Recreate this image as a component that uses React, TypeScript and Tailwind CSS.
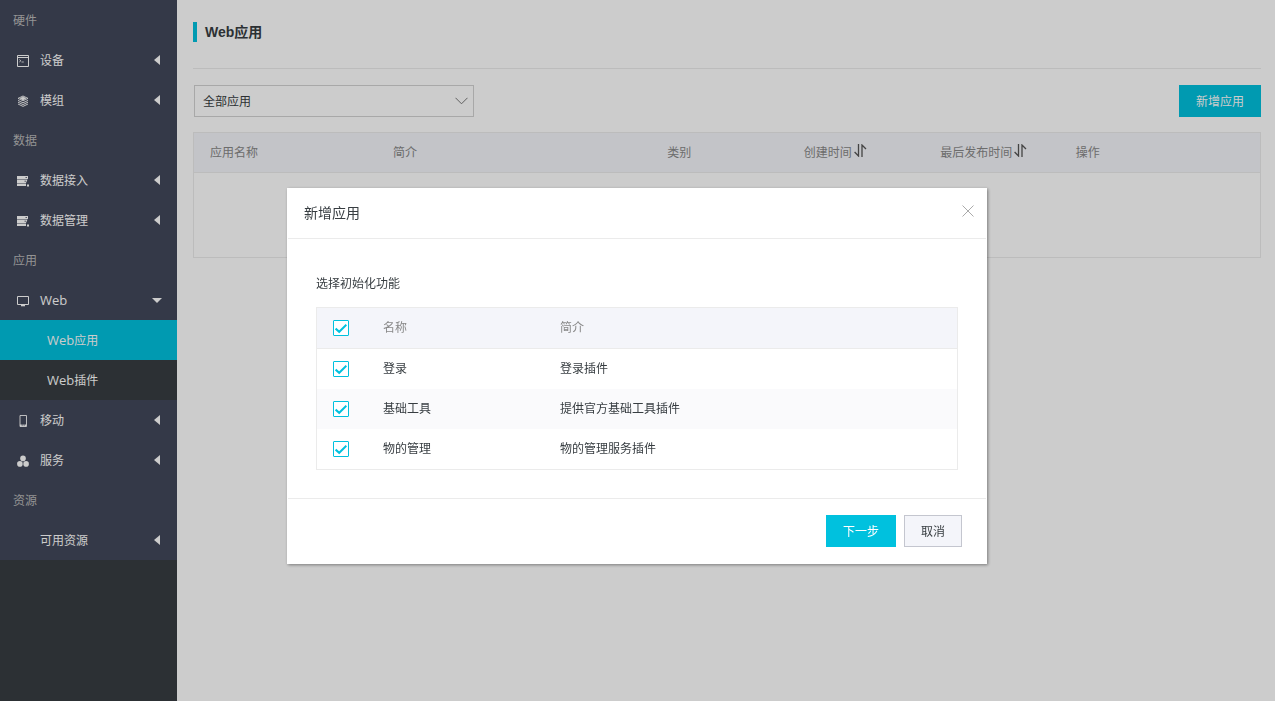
import React, { useState } from 'react';

interface MenuItem {
  label: string;
  icon?: React.ReactNode;
  open?: boolean;
  children?: { label: string; active?: boolean }[];
}

interface MenuGroup {
  title: string;
  items: MenuItem[];
}

interface Feature {
  id: string;
  name: string;
  intro: string;
}

const DeviceIcon = () => (
  <svg width="12" height="12" viewBox="0 0 12 12" fill="none" stroke="currentColor">
    <path d="M.5 .5h11v11H.5z" />
    <path d="M1 2.5h10" strokeWidth="1" />
    <path d="M2.3 4.5l1.6 1.3-1.6 1.2" strokeWidth=".8" />
    <path d="M4.5 7h2.3" strokeWidth=".8" />
  </svg>
);

const ModuleIcon = () => (
  <svg width="12" height="12" viewBox="0 0 12 12" fill="none" stroke="currentColor" strokeWidth=".9">
    <path d="M6 1l5 2.4-5 2.4-5-2.4z" />
    <path d="M6 2l2.6 1.4L6 4.8 3.4 3.4z" fill="currentColor" />
    <path d="M1 5.4l5 2.4 5-2.4" />
    <path d="M1 7.2l5 2.4 5-2.4" />
    <path d="M1 9l5 2.4L11 9" />
  </svg>
);

const DataIcon = () => (
  <svg width="12" height="12" viewBox="0 0 12 12" fill="currentColor">
    <path d="M0 1h11v3H0zM0 4.6h10.5L9 8H0zM0 8.6h9V11H0zM10 9.5h2v2h-2z" />
    <path d="M8.5 2.5H10M7.5 6.2H9" stroke="#42485a" strokeWidth=".8" />
  </svg>
);

const WebIcon = () => (
  <svg width="12" height="12" viewBox="0 0 12 12" fill="none" stroke="currentColor">
    <path d="M.5 1.5h11v8H.5z" />
    <path d="M4 10.6h4" strokeWidth="1.4" />
  </svg>
);

const MobileIcon = () => (
  <svg width="12" height="12" viewBox="0 0 12 12" fill="none" stroke="currentColor">
    <path d="M3 .5h6.5v11H3z" strokeWidth=".9" />
    <path d="M3 10.5h1.8M5.4 10.5h1.4M7.4 10.5H9" strokeWidth="2" />
  </svg>
);

const ServiceIcon = () => (
  <svg width="12" height="12" viewBox="0 0 12 12" fill="currentColor">
    <circle cx="6" cy="3.4" r="2.8" />
    <circle cx="2.9" cy="8.9" r="2.8" />
    <circle cx="9.1" cy="8.9" r="2.8" />
  </svg>
);

const menu: MenuGroup[] = [
  {
    title: '硬件',
    items: [
      { label: '设备', icon: <DeviceIcon /> },
      { label: '模组', icon: <ModuleIcon /> },
    ],
  },
  {
    title: '数据',
    items: [
      { label: '数据接入', icon: <DataIcon /> },
      { label: '数据管理', icon: <DataIcon /> },
    ],
  },
  {
    title: '应用',
    items: [
      {
        label: 'Web',
        icon: <WebIcon />,
        open: true,
        children: [{ label: 'Web应用', active: true }, { label: 'Web插件' }],
      },
      { label: '移动', icon: <MobileIcon /> },
      { label: '服务', icon: <ServiceIcon /> },
    ],
  },
  { title: '资源', items: [{ label: '可用资源' }] },
];

const features: Feature[] = [
  { id: 'login', name: '登录', intro: '登录插件' },
  { id: 'base', name: '基础工具', intro: '提供官方基础工具插件' },
  { id: 'thing', name: '物的管理', intro: '物的管理服务插件' },
];

// Latin words are set one size larger than the Chinese text beside them
const MenuLabel = ({ text }: { text: string }) => {
  const latin = text.match(/^[A-Za-z]+/)?.[0] ?? '';
  return (
    <>
      {latin && <span className="text-[13px]">{latin}</span>}
      {text.slice(latin.length)}
    </>
  );
};

const Sidebar = () => (
  <nav className="w-[177px] shrink-0 bg-[#373d41] text-white">
    <div className="bg-[#42485a]">
      {menu.map((group) => (
        <div key={group.title}>
          <h2 className="h-10 pt-0.5 pl-[13px] leading-[38px] text-[#b9b9b9]">{group.title}</h2>
          {group.items.map((item) => (
            <div key={item.label}>
              <button className="flex h-10 w-full items-center pl-[17px] pr-4 text-left" aria-expanded={!!item.open}>
                <span className="mr-[11px] mt-0.5 w-3">{item.icon}</span>
                <span className="grow pt-0.5"><MenuLabel text={item.label} /></span>
                {item.open ? (
                  <svg className="-mr-px" width="10" height="5" viewBox="0 0 10 5" fill="currentColor"><path d="M0 0h10L5 5z" /></svg>
                ) : (
                  <svg className="mr-px" width="6" height="10" viewBox="0 0 6 10" fill="currentColor"><path d="M6 0v10L0 5z" /></svg>
                )}
              </button>
              {item.children?.map((child) => (
                <a
                  key={child.label}
                  href="#"
                  className={`block h-10 pl-[47px] leading-10 ${child.active ? 'bg-[#00c1de]' : 'bg-[#373d41]'}`}
                >
                  <MenuLabel text={child.label} />
                </a>
              ))}
            </div>
          ))}
        </div>
      ))}
    </div>
  </nav>
);

const SortButton = ({ label }: { label: string }) => (
  <button className="flex items-center whitespace-nowrap" aria-label={`${label}排序`}>
    {label}
    <svg className="ml-0.5 mb-1" width="13" height="13" viewBox="0 0 13 13" fill="none" stroke="#555" strokeWidth="1.3">
      <path d="M4.5 0v12L.6 8" />
      <path d="M8 13V1l4 4" />
    </svg>
  </button>
);

const AppList = () => (
  <main className="min-w-0 grow pl-4 pr-[14px]">
    <header className="flex h-[69px] items-start border-b border-[#ebebeb] pt-[22px]">
      <h1 className="border-l-4 border-[#00c1de] pl-2 font-['Liberation_Sans','Noto_Sans_CJK_SC',sans-serif] text-sm leading-5 font-bold">
        Web应用
      </h1>
    </header>
    <div className="mt-4 flex items-center justify-between pl-px">
      <div className="grid w-[280px] items-center">
        <select
          aria-label="应用筛选"
          className="col-start-1 row-start-1 h-8 appearance-none border border-[#d2d2d2] bg-white px-2 pt-0.5"
        >
          <option>全部应用</option>
        </select>
        <svg
          className="pointer-events-none col-start-1 row-start-1 mr-1.5 justify-self-end"
          width="13" height="8" viewBox="0 0 13 8" fill="none" stroke="#777"
        >
          <path d="M.5 .8l6 6 6-6" />
        </svg>
      </div>
      <button className="h-8 bg-[#00c1de] px-[17px] pt-0.5 text-white">新增应用</button>
    </div>
    <table className="mt-[15px] w-full table-fixed border border-[#ebebeb] text-left">
      <thead>
        <tr className="h-10 border-b border-[#ebebeb] bg-[#f4f5fa] text-[#888]">
          <th className="w-[17.2%] pl-4 font-normal">应用名称</th>
          <th className="w-[25.7%] pl-4 font-normal">简介</th>
          <th className="w-[12.8%] pl-4 font-normal">类别</th>
          <th className="w-[12.8%] pl-4 font-normal"><SortButton label="创建时间" /></th>
          <th className="w-[12.7%] pl-4 font-normal"><SortButton label="最后发布时间" /></th>
          <th className="pl-4 font-normal">操作</th>
        </tr>
      </thead>
      <tbody>
        <tr className="h-[85px]"><td colSpan={6} /></tr>
      </tbody>
    </table>
  </main>
);

interface CheckboxProps {
  label: string;
  checked: boolean;
  onChange: () => void;
}

const Checkbox = ({ label, checked, onChange }: CheckboxProps) => (
  <span className="grid w-4 place-items-center">
    <input
      type="checkbox"
      aria-label={label}
      checked={checked}
      onChange={onChange}
      className="peer col-start-1 row-start-1 h-4 w-4 appearance-none rounded-[1px] border border-[#00c1de] bg-white"
    />
    <svg
      className="pointer-events-none invisible col-start-1 row-start-1 peer-checked:visible"
      width="12" height="12" viewBox="0 0 12 12" fill="none" stroke="#00c1de" strokeWidth="2"
    >
      <path d="M.6 6.6l3.6 3.2 7.2-7" />
    </svg>
  </span>
);

const CreateDialog = () => {
  const [selected, setSelected] = useState<string[]>(features.map((f) => f.id));
  const allSelected = selected.length === features.length;

  const toggle = (id: string) => {
    setSelected(selected.includes(id) ? selected.filter((s) => s !== id) : [...selected, id]);
  };

  return (
    <div className="fixed inset-0 flex items-start justify-center bg-black/20 pt-[188px] pr-px">
      <div
        role="dialog"
        aria-labelledby="create-title"
        className="w-full max-w-[700px] border border-white bg-white shadow-[1px_1px_3px_rgba(0,0,0,0.4)]"
      >
        <header className="flex h-[50px] items-center justify-between border-b border-[#ebebeb] pl-4 pr-3 pb-0.5">
          <h2 id="create-title" className="text-sm">新增应用</h2>
          <button aria-label="关闭" className="mb-1">
            <svg width="12" height="12" viewBox="0 0 12 12" stroke="#aaa"><path d="M.5 .5l11 11M11.5 .5l-11 11" /></svg>
          </button>
        </header>
        <div className="px-7 pt-[35px] pb-7">
          <p className="mb-[13px] leading-5">选择初始化功能</p>
          <table className="w-full table-fixed border-separate border-spacing-0 border border-[#ebebeb] text-left">
            <thead>
              <tr className="h-[41px] bg-[#f4f5fa] text-[#888]">
                <th className="w-[50px] border-b border-[#ebebeb] pl-4">
                  <Checkbox
                    label="全选"
                    checked={allSelected}
                    onChange={() => setSelected(allSelected ? [] : features.map((f) => f.id))}
                  />
                </th>
                <th className="w-[177px] border-b border-[#ebebeb] pl-4 font-normal">名称</th>
                <th className="border-b border-[#ebebeb] pl-4 font-normal">简介</th>
              </tr>
            </thead>
            <tbody>
              {features.map((feature) => (
                <tr key={feature.id} className="h-10 even:bg-[#fafafc]">
                  <td className="pl-4">
                    <Checkbox
                      label={feature.name}
                      checked={selected.includes(feature.id)}
                      onChange={() => toggle(feature.id)}
                    />
                  </td>
                  <td className="pl-4">{feature.name}</td>
                  <td className="pl-4">{feature.intro}</td>
                </tr>
              ))}
            </tbody>
          </table>
        </div>
        <footer className="flex justify-end gap-2 border-t border-[#ebebeb] py-4 pr-6">
          <button className="h-8 bg-[#00c1de] px-[17px] pt-0.5 text-white">下一步</button>
          <button className="h-8 border border-[#c4c6cf] bg-[#f4f5fa] px-4 pt-0.5">取消</button>
        </footer>
      </div>
    </div>
  );
};

const App = () => (
  <div className="flex min-h-screen bg-white font-['Open_Sans','Noto_Sans_CJK_SC',sans-serif] text-xs text-[#373d41]">
    <Sidebar />
    <AppList />
    <CreateDialog />
  </div>
);

export default App;
